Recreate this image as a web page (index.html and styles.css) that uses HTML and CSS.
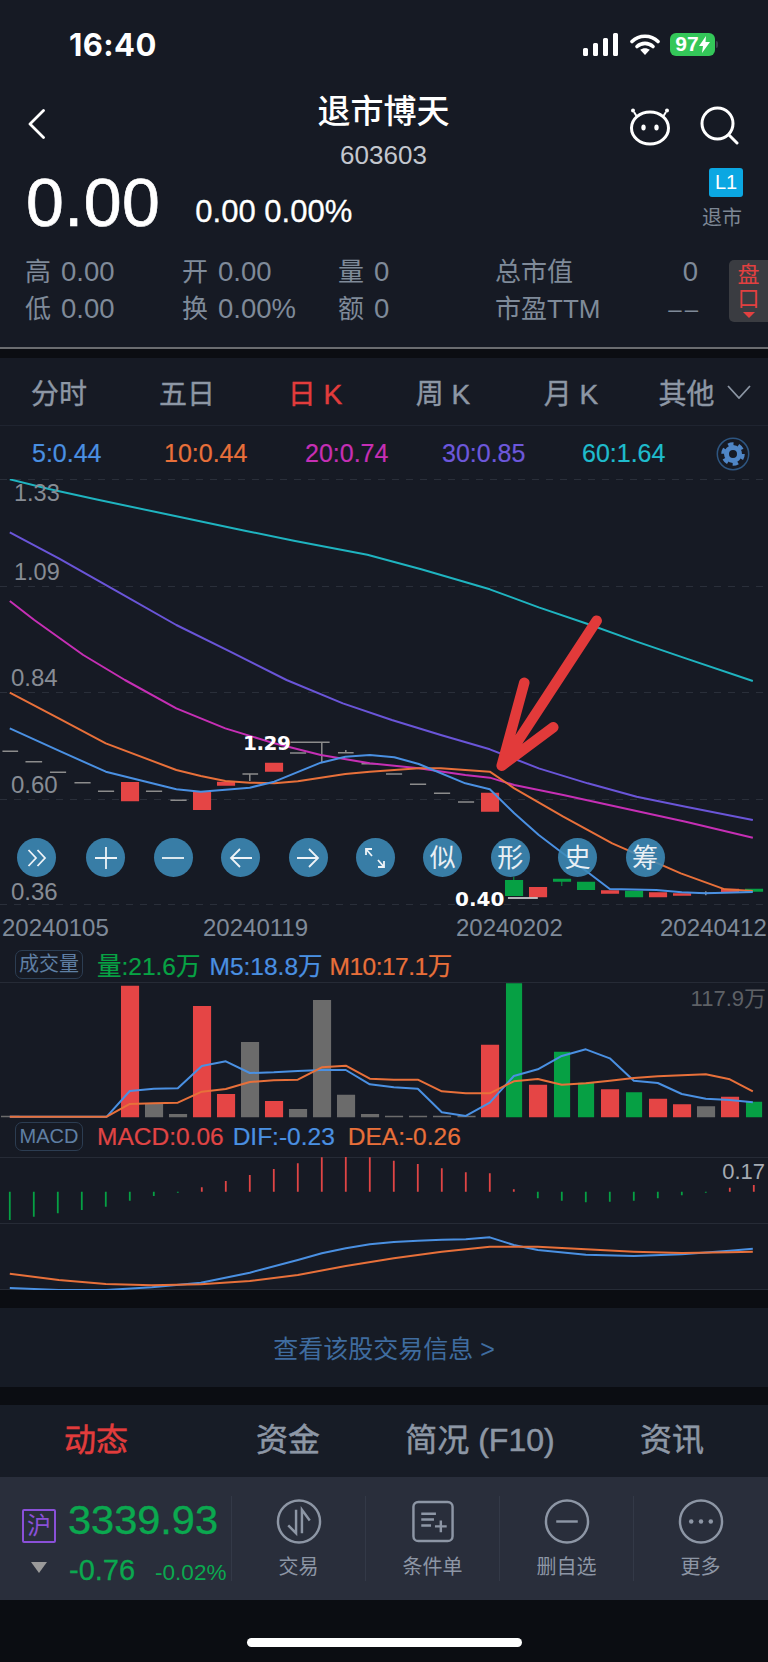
FILE: index.html
```html
<!DOCTYPE html>
<html lang="zh-CN">
<head>
<meta charset="utf-8">
<title>退市博天</title>
<link rel="stylesheet" href="styles.css">
</head>
<body>
<div class="page">
  <header class="head">
    <div class="status">
      <span class="time">16:40</span>
      <div class="status-icons">
        <svg class="signal" width="36" height="23" viewBox="0 0 36 23"><path fill="#fff" d="M0 16.5a1.5 1.5 0 0 1 1.5-1.500h2a1.500 1.500 0 0 1 1.500 1.500v5a1.500 1.500 0 0 1-1.500 1.500h-2a1.500 1.500 0 0 1-1.500-1.500zM10 11.500a1.500 1.500 0 0 1 1.500-1.500h2a1.500 1.500 0 0 1 1.500 1.500v10a1.500 1.500 0 0 1-1.500 1.500h-2a1.500 1.500 0 0 1-1.500-1.500zM20 6.500a1.500 1.500 0 0 1 1.500-1.500h2a1.500 1.500 0 0 1 1.500 1.500v15a1.500 1.500 0 0 1-1.500 1.500h-2a1.500 1.500 0 0 1-1.500-1.500zM30 1.500a1.500 1.500 0 0 1 1.500-1.500h2a1.500 1.500 0 0 1 1.500 1.500v20a1.500 1.500 0 0 1-1.500 1.500h-2a1.500 1.500 0 0 1-1.500-1.500z"/></svg>
        <svg class="wifi" width="30" height="22" viewBox="0 0 30 22" fill="none" stroke="#fff" stroke-width="3.600" stroke-linecap="round"><path d="M2 8.500C9 1.500 21 1.500 28 8.500"/><path d="M7 13.500c4.500-4.200 11.500-4.200 16 0"/><path fill="#fff" stroke="none" d="M15 22l-4.800-5.200c2.600-2.200 7-2.200 9.600 0z"/></svg>
        <div class="battery"><span class="bat-body">97<svg width="11" height="17" viewBox="0 0 11 17"><path fill="#fff" d="M7 0 0 10h4l-1 7 8-11H6.500z"/></svg></span><i class="bat-nub"></i></div>
      </div>
    </div>
    <div class="nav">
      <svg class="back" width="17" height="30" viewBox="0 0 17 30" fill="none" stroke="#fff" stroke-width="2.800" stroke-linecap="round" stroke-linejoin="round"><path d="M15.500 1.500 2 15l13.500 13.500"/></svg>
      <div class="title-block">
        <div class="title">退市博天</div>
        <div class="code">603603</div>
      </div>
      <div class="nav-icons">
        <svg width="44" height="40" viewBox="0 0 44 40" fill="none" stroke="#fff" stroke-width="3"><ellipse cx="22" cy="22" rx="18.500" ry="16"/><path stroke-width="2" d="M8.500 10 6 6M35.500 10 38 6"/><circle cx="5" cy="4.500" r="2" fill="#fff" stroke="none"/><circle cx="39" cy="4.500" r="2" fill="#fff" stroke="none"/><ellipse cx="15.500" cy="21.500" rx="2.200" ry="3" fill="#fff" stroke="none"/><ellipse cx="28.500" cy="21.500" rx="2.200" ry="3" fill="#fff" stroke="none"/></svg>
        <svg width="40" height="40" viewBox="0 0 40 40" fill="none" stroke="#fff" stroke-width="3" stroke-linecap="round"><circle cx="18.500" cy="17.500" r="15.500"/><path d="M30 29l8 8"/></svg>
      </div>
    </div>
    <div class="quote">
      <span class="price">0.00</span>
      <span class="change">0.00 0.00%</span>
      <div class="level">
        <span class="l1">L1</span>
        <span class="delisted">退市</span>
      </div>
    </div>
    <div class="stats">
      <div class="stat-grid">
        <div class="stat"><span class="k">高</span><span class="v">0.00</span></div>
        <div class="stat"><span class="k">开</span><span class="v">0.00</span></div>
        <div class="stat"><span class="k">量</span><span class="v">0</span></div>
        <div class="stat wide"><span class="k">总市值</span><span class="v">0</span></div>
        <div class="stat"><span class="k">低</span><span class="v">0.00</span></div>
        <div class="stat"><span class="k">换</span><span class="v">0.00%</span></div>
        <div class="stat"><span class="k">额</span><span class="v">0</span></div>
        <div class="stat wide"><span class="k">市盈TTM</span><span class="v nil">––</span></div>
      </div>
      <div class="pankou"><span>盘</span><span>口</span><i class="pan-arrow"></i></div>
    </div>
  </header>
  <div class="rule"></div>

  <nav class="periods">
    <span>分时</span><span>五日</span><span class="on">日 K</span><span>周 K</span><span>月 K</span>
    <span class="other">其他<svg width="24" height="14" viewBox="0 0 24 14" fill="none" stroke="#8b95a3" stroke-width="1.800"><path d="M1 1l11 12L23 1"/></svg></span>
  </nav>

  <div class="ma-row">
    <span class="c-blue">5:0.44</span>
    <span class="c-orange">10:0.44</span>
    <span class="c-magenta">20:0.74</span>
    <span class="c-purple">30:0.85</span>
    <span class="c-teal">60:1.64</span>
    <svg class="gear" width="34" height="34" viewBox="0 0 34 34" fill="none"><circle cx="17" cy="17" r="15.700" stroke="#2d5580" stroke-width="1.500"/><circle cx="17" cy="17" r="6.500" stroke="#4f86c6" stroke-width="5"/><circle cx="17" cy="17" r="10" stroke="#4f86c6" stroke-width="3.500" stroke-dasharray="5.470 5"/></svg>
  </div>

  <section class="kline">
    <svg class="plot" width="768" height="426" viewBox="0 0 768 426">
      <path class="grid" d="M0 .5H768M0 107.500H768M0 213.500H768M0 320.500H768M0 425.500H768"/>
      <g transform="translate(0 201) scale(.4898 .33333)">
        <path class="dash" d="M5 214H37M52 245H86M102 277H135M152 308H185M200 334H233M298 334H331M348 361H381M495 282H527M510 282V303M592 219H625M593 187H673M657 187V248M690 218H722M706 210V218M738 251H771M788 282H821M837 313H870M886 340H919M935 366H968M1441 634V646M1425 640H1457"/>
        <path class="red" d="M247 306H284V364H247ZM394 335H431V390H394ZM443 305H480V317H443ZM541 248H578V275H541ZM982 338H1019V395H982ZM1080 621H1117V652H1080ZM1227 631H1264V641H1227ZM1325 637H1362V652H1325ZM1374 640H1411V647H1374ZM1472 626H1509V637H1472Z"/>
        <path class="green" d="M1031 600H1068V648H1031ZM1048 590H1050V600H1048ZM1129 596H1166V605H1129ZM1146 605H1148V618H1146ZM1178 605H1215V630H1178ZM1276 632H1313V652H1276ZM1521 626H1558V635H1521Z"/>
        <path class="low" d="M1037 654H1098"/>
        <polyline class="line teal" points="20,-602 100,-573 200,-541 360,-491 500,-448 600,-418 750,-376 860,-332 1000,-272 1100,-218 1200,-168 1300,-115 1400,-65 1537,3"/>
        <polyline class="line purple" points="20,-443 120,-365 240,-265 360,-165 470,-85 585,0 700,70 800,120 900,165 1000,208 1100,265 1200,310 1300,350 1400,380 1537,420"/>
        <polyline class="line magenta" points="20,-237 70,-180 170,-75 255,0 360,85 460,145 560,190 655,225 755,250 855,265 950,285 1000,293 1050,315 1150,345 1290,390 1400,425 1537,473"/>
        <polyline class="line orange" points="20,38 120,115 216,190 360,270 410,288 460,303 510,308 560,310 608,304 705,282 755,275 855,265 900,265 1000,275 1050,325 1150,410 1250,490 1390,580 1480,628 1537,633"/>
        <polyline class="line blue" points="20,145 120,212 216,275 360,328 410,335 510,323 560,305 655,248 705,230 755,225 805,232 855,252 950,310 1000,328 1050,400 1100,465 1245,627 1340,630 1392,637 1440,640 1537,636"/>
      </g>
      <path class="pen" d="M596.700 141.700 501.700 286.700M524.300 203.700 501.700 286.700 553.300 248.300"/>
    </svg>
    <span class="axis a1">1.33</span>
    <span class="axis a2">1.09</span>
    <span class="axis a3">0.84</span>
    <span class="axis a4">0.60</span>
    <span class="axis a5">0.36</span>
    <span class="mark m-high">1.29</span>
    <span class="mark m-low">0.40</span>
    <div class="tools">
      <span class="tool"><svg width="24" height="24" viewBox="0 0 24 24"><path d="M3.500 4l7.500 8-7.500 8M12.500 4l7.500 8-7.500 8"/></svg></span>
      <span class="tool"><svg width="24" height="24" viewBox="0 0 24 24"><path d="M12 1v22M1 12h22"/></svg></span>
      <span class="tool"><svg width="24" height="24" viewBox="0 0 24 24"><path d="M1 12h22"/></svg></span>
      <span class="tool"><svg width="24" height="24" viewBox="0 0 24 24"><path d="M23 12H2M11 3l-9 9 9 9"/></svg></span>
      <span class="tool"><svg width="24" height="24" viewBox="0 0 24 24"><path d="M1 12h21M13 3l9 9-9 9"/></svg></span>
      <span class="tool"><svg width="24" height="24" viewBox="0 0 24 24"><path d="M3 3l6 7M3 9V3h6M21 21l-6-7M21 15v6h-6"/></svg></span>
      <span class="tool">似</span>
      <span class="tool">形</span>
      <span class="tool">史</span>
      <span class="tool">筹</span>
    </div>
  </section>
  <div class="dates"><span>20240105</span><span>20240119</span><span>20240202</span><span>20240412</span></div>

  <div class="ind-head vol-head">
    <span class="tag">成交量</span>
    <span class="c-green">量:21.6万</span>
    <span class="c-blue">M5:18.8万</span>
    <span class="c-orange tight">M10:17.1万</span>
  </div>
  <section class="vol">
    <svg class="plot" width="768" height="136" viewBox="0 0 768 136">
      <path class="frame" d="M0 .5H768"/>
      <g transform="translate(0 -32) scale(.4898 .33333)">
        <path class="bar-red" d="M247 107H284V502H247ZM394 168H431V502H394ZM443 432H480V502H443ZM541 453H578V502H541ZM982 284H1019V502H982ZM1080 404H1117V502H1080ZM1227 418H1264V502H1227ZM1325 446H1362V502H1325ZM1374 463H1411V502H1374ZM1472 440H1509V502H1472Z"/>
        <path class="bar-green" d="M1033 100H1066V502H1033ZM1131 305H1164V502H1131ZM1180 398H1213V502H1180ZM1278 427H1311V502H1278ZM1523 455H1556V502H1523Z"/>
        <path class="bar-grey" d="M296 460H333V502H296ZM345 492H382V502H345ZM492 276H529V502H492ZM590 477H627V502H590ZM639 150H676V502H639ZM688 434H725V502H688ZM737 492H774V502H737ZM786 497H823V502H786ZM835 497H872V502H835ZM884 497H921V502H884ZM934 497H971V502H934ZM1423 469H1460V502H1423ZM2 497H40V502H2Z"/>
        <polyline class="line blue" points="20,500 218,500 265,423 314,416 363,415 412,348 461,334 510,369 559,367 608,363 657,360 706,360 755,403 804,412 853,416 902,487 951,498 1000,458 1049,378 1098,358 1147,318 1196,298 1245,325 1294,392 1343,399 1392,432 1441,446 1490,450 1537,457"/>
        <polyline class="line orange" points="20,500 218,500 265,462 314,460 363,458 412,425 461,417 510,396 559,391 608,389 657,352 706,347 755,386 804,389 853,389 902,424 951,430 1000,430 1049,394 1098,387 1147,404 1196,400 1245,392 1294,384 1343,379 1392,376 1441,373 1490,388 1537,424"/>
      </g>
    </svg>
    <span class="scale-vol">117.9万</span>
  </section>
  <div class="ind-head macd-head">
    <span class="tag">MACD</span>
    <span class="c-red">MACD:0.06</span>
    <span class="c-blue">DIF:-0.23</span>
    <span class="c-orange dea">DEA:-0.26</span>
  </div>
  <section class="macd">
    <svg class="plot" width="768" height="133" viewBox="0 0 768 133">
      <path class="frame" d="M0 .5H768M0 66.500H768M0 132.500H768"/>
      <g transform="translate(0 -207) scale(.4898 .33333)">
        <path class="tick-green" d="M20 725V810M69 725V800M118 725V790M167 725V780M216 725V770M265 725V752M314 725V738M363 725V728M1098 725V745M1147 725V752M1196 725V757M1245 725V755M1294 725V752M1343 725V745M1392 725V736M1441 725V728"/>
        <path class="tick-red" d="M412 725V712M461 725V693M510 725V675M559 725V657M608 725V640M657 725V622M706 725V620M755 725V622M804 725V632M853 725V642M902 725V655M951 725V667M1000 725V670M1049 725V718M1490 725V713M1539 725V705"/>
        <polyline class="line blue" points="20,1014 120,1020 216,1020 310,1012 410,998 510,968 608,930 657,910 706,895 755,883 804,876 853,872 902,869 951,868 1000,862 1049,885 1098,900 1196,914 1294,918 1392,913 1490,902 1537,896"/>
        <polyline class="line orange" points="20,971 120,990 216,1002 310,1006 410,1003 510,993 608,975 706,948 804,925 902,905 1000,890 1098,890 1196,898 1294,905 1392,909 1490,907 1537,905"/>
      </g>
    </svg>
    <span class="scale-macd">0.17</span>
  </section>

  <div class="link-row">查看该股交易信息 &gt;</div>

  <nav class="sections">
    <span class="on">动态</span><span>资金</span><span>简况 (F10)</span><span>资讯</span>
  </nav>

  <footer class="toolbar">
    <div class="index">
      <span class="hu">沪</span>
      <span class="idx-val">3339.93</span>
      <i class="tri"></i>
      <div class="idx-chg"><span class="pts">-0.76</span><span class="pct">-0.02%</span></div>
    </div>
    <div class="act">
      <svg width="46" height="46" viewBox="0 0 46 46"><circle cx="23" cy="23" r="21.500"/><path d="M20 11v24l-8-8M26 35V11l8 11"/></svg>
      <span>交易</span>
    </div>
    <div class="act">
      <svg width="46" height="46" viewBox="0 0 46 46"><rect x="3" y="3" width="40" height="40" rx="5"/><path d="M11 15h15M11 21h13M11 27h10M25 28h12M31 22v12"/></svg>
      <span>条件单</span>
    </div>
    <div class="act">
      <svg width="46" height="46" viewBox="0 0 46 46"><circle cx="23" cy="23" r="21.500"/><path d="M12 23h22"/></svg>
      <span>删自选</span>
    </div>
    <div class="act">
      <svg width="46" height="46" viewBox="0 0 46 46"><circle cx="23" cy="23" r="21.500"/><circle class="dot" cx="13" cy="23" r="2.300"/><circle class="dot" cx="23" cy="23" r="2.300"/><circle class="dot" cx="33" cy="23" r="2.300"/></svg>
      <span>更多</span>
    </div>
  </footer>
  <div class="home"><i class="home-bar"></i></div>
</div>
</body>
</html>
```
FILE: styles.css
```css
* { box-sizing: border-box; }
html, body { margin: 0; padding: 0; background: #0b0d12; }
body { font-family: "Liberation Sans", "Noto Sans CJK SC", sans-serif; color: #8b95a3; }
.page { width: 768px; height: 1662px; overflow: hidden; background: #0b0d12; }

.head { height: 347px; background: #161a24; }
.status { height: 88px; padding: 0 50px 0 69px; display: flex; align-items: center; justify-content: space-between; }
.time { font-family: Inter, "Liberation Sans", sans-serif; font-weight: 700; font-size: 31px; color: #fff; letter-spacing: .4px; }
.status-icons { display: flex; align-items: center; }
.signal { margin-right: 11px; }
.wifi { margin-right: 10px; }
.battery { display: flex; align-items: center; }
.bat-body { width: 45px; height: 23px; border-radius: 6px; background: #34c759; color: #fff; font-weight: 700; font-size: 21px; display: flex; align-items: center; justify-content: center; }
.bat-nub { width: 2px; height: 7px; margin-left: 1px; background: #3c424d; border-radius: 0 2px 2px 0; }

.nav { height: 80px; padding: 0 29px 0 28px; display: grid; grid-template-columns: 220px 1fr 220px; align-items: start; }
.back { margin-top: 21px; }
.title-block { text-align: center; }
.title { font-size: 33px; line-height: 48px; font-weight: 500; color: #fff; }
.code { font-size: 26px; line-height: 38px; color: #c3c7ce; }
.nav-icons { display: flex; justify-content: flex-end; align-items: center; gap: 27px; margin-top: 18px; }

.quote { height: 85px; padding-left: 26px; padding-right: 25px; display: flex; align-items: flex-start; }
.price { font-size: 68px; line-height: 68px; color: #fff; -webkit-text-stroke: .7px #fff; letter-spacing: .5px; }
.change { font-size: 31px; line-height: 40px; color: #fff; margin: 24px 0 0 35px; -webkit-text-stroke: .3px #fff; }
.level { margin-left: auto; display: flex; flex-direction: column; align-items: flex-end; }
.l1 { width: 34px; height: 29px; border-radius: 3px; background: #0ba7e2; color: #fff; font-size: 20px; line-height: 29px; text-align: center; }
.delisted { font-size: 20px; line-height: 30px; color: #7d8795; margin-right: 1px; margin-top: 6px; }

.stats { display: flex; padding-left: 25px; }
.stat-grid { display: grid; grid-template-columns: 157px 156px 157px 203px; grid-auto-rows: 37px; }
.stat { display: flex; align-items: center; gap: 10px; font-size: 27.500px; white-space: nowrap; color: #7f8a99; }
.stat .k { font-size: 26px; margin-top: -4px; }
.stat.wide { justify-content: space-between; gap: 0; }
.stat .nil { font-size: 24px; letter-spacing: 3px; margin-right: -3px; }
.pankou { width: 39px; height: 62px; margin: 7px 0 0 31px; background: #3a3c41; border-radius: 5px 0 0 5px; display: flex; flex-direction: column; align-items: center; color: #e24040; font-size: 22px; line-height: 24px; padding-top: 3px; }
.pan-arrow { width: 0; height: 0; border-left: 6px solid transparent; border-right: 6px solid transparent; border-top: 6px solid #e24040; margin-top: 1px; }

.rule { height: 11px; border-top: 2px solid #6a6c70; background: #0b0d12; }

.periods { height: 68px; background: #161a24; margin-left: -5px; display: grid; grid-template-columns: repeat(5, 128px) 1fr; align-items: center; text-align: center; font-size: 28px; color: #8d97a5; border-bottom: 1px solid #1f2430; -webkit-text-stroke: .4px; }
.periods .on { color: #e23c3c; }
.other { display: flex; align-items: center; justify-content: center; gap: 12px; padding-left: 6px; }

.ma-row { height: 53px; background: #161a24; padding: 2px 0 0 32px; display: grid; grid-template-columns: 132px 141px 137px 140px 134px 34px; align-items: center; font-size: 25px; -webkit-text-stroke: .2px; }
.c-blue { color: #4a90e2; }
.c-orange { color: #e8703a; }
.c-magenta { color: #c62fb5; }
.c-purple { color: #6d58dc; }
.c-teal { color: #1fbccd; }
.c-green { color: #07a344; }
.c-red { color: #e04545; }

.kline { position: relative; height: 426px; background: #161a24; }
.vol, .macd { position: relative; background: #161a24; }
.vol { height: 136px; }
.macd { height: 133px; }
.plot { display: block; }
.plot * { vector-effect: non-scaling-stroke; }
.grid { stroke: #2a2f3a; stroke-width: 1; stroke-dasharray: 7 7; fill: none; }
.frame { stroke: #262b36; stroke-width: 1; fill: none; }
.dash { stroke: #8c8c8c; stroke-width: 1.500; fill: none; }
.low { stroke: #e8e8e8; stroke-width: 1.500; fill: none; }
.red, .bar-red { fill: #e54545; }
.green, .bar-green { fill: #06a044; }
.bar-grey { fill: #6b6b6b; }
.line { fill: none; stroke-width: 2; stroke-linejoin: round; }
.teal { stroke: #1fb4c0; }
.purple { stroke: #6a55d8; }
.magenta { stroke: #c62fb5; }
.orange { stroke: #e8703a; }
.blue { stroke: #4a90e2; }
.pen { fill: none; stroke: #e23a3a; stroke-width: 10.500; stroke-linecap: round; stroke-linejoin: round; }
.tick-green { stroke: #06a044; stroke-width: 1.800; fill: none; }
.tick-red { stroke: #e04545; stroke-width: 1.800; fill: none; }

.axis { position: absolute; left: 11px; font-size: 24px; line-height: 28px; color: #878c94; }
.a1 { top: 0; left: 14px; font-size: 23.500px; }
.a2 { top: 79px; left: 14px; font-size: 23.500px; }
.a3 { top: 185px; }
.a4 { top: 292px; }
.a5 { top: 399px; }
.mark { position: absolute; font-family: "DejaVu Sans", sans-serif; font-weight: 700; font-size: 20px; line-height: 24px; color: #fff; }
.m-high { left: 243px; top: 252px; letter-spacing: -.5px; }
.m-low { left: 455px; top: 408px; }

.tools { position: absolute; left: 17px; top: 359px; display: flex; gap: 28.400px; }
.tool { width: 39px; height: 39px; border-radius: 50%; background: rgba(62, 139, 184, .88); color: #e9eff4; font-size: 26px; line-height: 38px; text-align: center; display: flex; align-items: center; justify-content: center; }
.tool:first-child { margin-right: 2px; }
.tool svg { fill: none; stroke: #eef3f7; stroke-width: 1.800; }

.dates { height: 45px; background: #161a24; padding-left: 2px; display: grid; grid-template-columns: 201px 253px 204px 1fr; align-items: center; font-size: 24px; color: #7f8a99; white-space: nowrap; }

.ind-head { background: #161a24; padding-left: 15px; display: flex; align-items: center; font-size: 24.500px; white-space: nowrap; gap: 9px; -webkit-text-stroke: .2px; }
.vol-head { height: 32px; padding-bottom: 4px; }
.macd-head { height: 39px; padding-bottom: 2px; }
.tight { letter-spacing: -.5px; margin-left: -2px; }
.dea { margin-left: 4px; }
.tag { width: 68px; height: 29px; margin-right: 5px; border: 1px solid #2c3d52; border-radius: 7px; font-size: 20px; line-height: 27px; text-align: center; color: #5f7fa3; -webkit-text-stroke: 0; }
.scale-vol { position: absolute; right: 2px; top: 5px; font-size: 22px; line-height: 24px; color: #5e6166; }
.scale-macd { position: absolute; right: 3px; top: 2px; font-size: 22px; line-height: 26px; color: #a5abb3; }

.link-row { height: 79px; margin-top: 18px; padding-bottom: 2px; background: #161b25; display: flex; align-items: center; justify-content: center; font-size: 25px; color: #3f6c9f; }

.sections { height: 72px; margin-top: 18px; padding-bottom: 8px; background: #171c26; display: grid; grid-template-columns: repeat(4, 192px); align-items: center; text-align: center; font-size: 32px; color: #8d97a5; -webkit-text-stroke: .5px; }
.sections .on { color: #e23c3c; }

.toolbar { height: 123px; background: #292e3b; display: flex; align-items: center; }
.index { width: 231px; height: 85px; position: relative; }
.hu { position: absolute; left: 22px; top: 13px; width: 34px; height: 34px; border: 2px solid #8a50d8; border-radius: 2px; color: #8a50d8; font-size: 24px; line-height: 29px; text-align: center; }
.idx-val { position: absolute; left: 68px; top: 0; font-size: 41.500px; line-height: 48px; color: #0ba84f; -webkit-text-stroke: .4px; }
.tri { position: absolute; left: 31px; top: 66px; width: 0; height: 0; border-left: 8px solid transparent; border-right: 8px solid transparent; border-top: 11px solid #9a9a9a; }
.idx-chg { position: absolute; left: 69px; top: 56px; display: flex; align-items: baseline; gap: 20px; color: #0ba84f; }
.pts { font-size: 29px; line-height: 36px; -webkit-text-stroke: .3px; }
.pct { font-size: 22.500px; }
.act { width: 134px; height: 85px; padding-top: 3px; border-left: 1px solid #333947; display: flex; flex-direction: column; align-items: center; font-size: 20px; line-height: 28px; color: #8d96a5; }
.act svg { fill: none; stroke: #8d96a5; stroke-width: 2.500; margin-bottom: 9px; }
.act svg .dot { fill: #8d96a5; stroke: none; }

.home { height: 62px; display: flex; justify-content: center; padding-top: 38px; }
.home-bar { width: 275px; height: 9px; border-radius: 5px; background: #fff; }
```
